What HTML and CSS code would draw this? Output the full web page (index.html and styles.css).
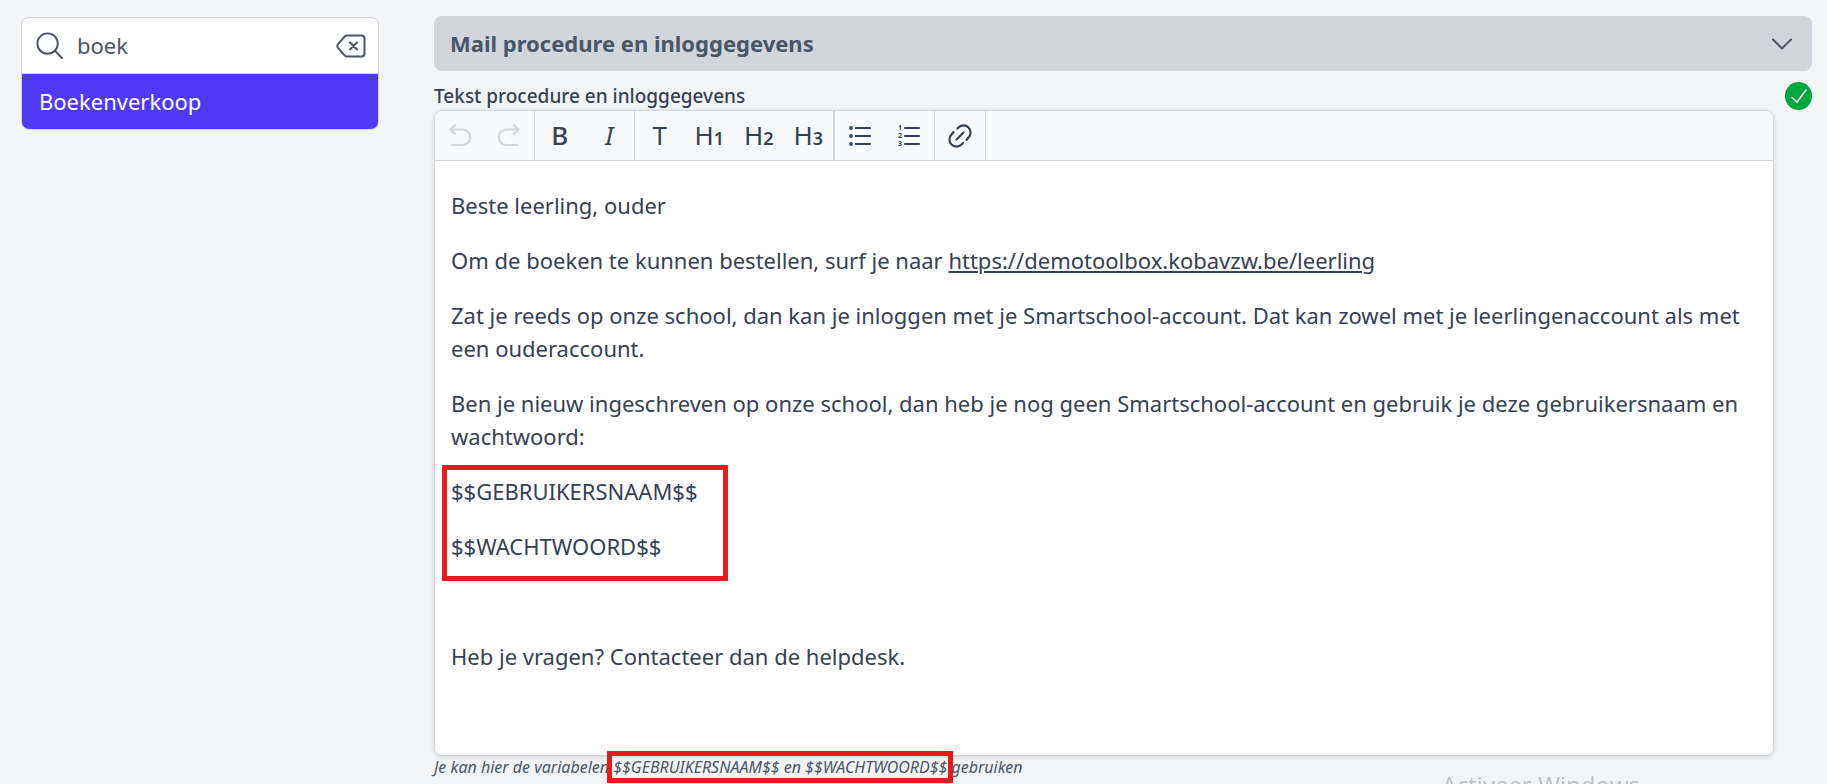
FILE: index.html
```html
<!DOCTYPE html>
<html lang="nl">
<head>
<meta charset="utf-8">
<meta name="viewport" content="width=device-width, initial-scale=1">
<title>Boekenverkoop</title>
<link rel="stylesheet" href="styles.css">
</head>
<body>
<div class="page">
  <nav class="sidebar" aria-label="Menu">
    <div class="search">
      <svg class="search-icon" viewBox="0 0 28 28" aria-hidden="true"><circle cx="12" cy="12" r="10.6"/><path d="M19.5 19.5 27 27"/></svg>
      <input class="search-input" type="text" value="boek" aria-label="Zoeken">
      <button class="search-clear" type="button" aria-label="Wissen">
        <svg viewBox="0 0 30 24" aria-hidden="true"><path d="M11 1.5h14.5a3 3 0 0 1 3 3v15a3 3 0 0 1-3 3H11a3 3 0 0 1-2.2-.9L2 13.8a2.500 2.500 0 0 1 0-3.600L8.800 2.400A3 3 0 0 1 11 1.500Z"/><path d="m14 8.500 7 7m0-7-7 7"/></svg>
      </button>
    </div>
    <a class="menu-item" href="#boekenverkoop">Boekenverkoop</a>
  </nav>

  <main class="main">
    <button class="section-header" type="button" aria-expanded="true">
      <span>Mail procedure en inloggegevens</span>
      <svg class="chevron" viewBox="0 0 20 12" aria-hidden="true"><path d="m1 1.500 9 9 9-9"/></svg>
    </button>

    <div class="label-row">
      <span class="label" id="editor-label">Tekst procedure en inloggegevens</span>
      <span class="status" role="img" aria-label="Opgeslagen">
        <svg viewBox="0 0 16 14" aria-hidden="true"><path d="M1 8.500 6 13 15 1"/></svg>
      </span>
    </div>

    <div class="editor">
      <div class="toolbar" role="toolbar" aria-label="Opmaak">
        <div class="group">
          <button class="tool" type="button" disabled aria-label="Ongedaan maken"><svg viewBox="0 0 24 24"><path d="M7 1 2.500 5.500 7 10M2.500 5.500h12a7.500 7.500 0 0 1 0 15.500H4"/></svg></button>
          <button class="tool" type="button" disabled aria-label="Opnieuw"><svg viewBox="0 0 24 24"><path d="m17 1 4.500 4.500L17 10M21.500 5.500h-12a7.500 7.500 0 0 0 0 15.500H20"/></svg></button>
        </div>
        <div class="group">
          <button class="tool letter strong" type="button" aria-label="Vet">B</button>
          <button class="tool letter slanted" type="button" aria-label="Cursief">I</button>
        </div>
        <div class="group group-wide">
          <button class="tool letter" type="button" aria-label="Tekst">T</button>
          <button class="tool letter" type="button" aria-label="Kop 1">H<span class="level">1</span></button>
          <button class="tool letter" type="button" aria-label="Kop 2">H<span class="level">2</span></button>
          <button class="tool letter" type="button" aria-label="Kop 3">H<span class="level">3</span></button>
        </div>
        <div class="group">
          <button class="tool" type="button" aria-label="Opsomming"><svg viewBox="0 0 24 24"><path d="M8 4h14M8 12h14M8 20h14"/><g class="dots"><circle cx="3" cy="4" r="1.900"/><circle cx="3" cy="12" r="1.900"/><circle cx="3" cy="20" r="1.900"/></g></svg></button>
          <button class="tool" type="button" aria-label="Genummerde lijst"><svg viewBox="0 0 24 24"><path d="M8 4h14M8 12h14M8 20h14"/><g class="numbers"><text x="1" y="6">1</text><text x="1" y="14">2</text><text x="1" y="22">3</text></g></svg></button>
        </div>
        <div class="group group-single">
          <button class="tool" type="button" aria-label="Link"><svg viewBox="0 0 24 24"><path d="m8.500 15.500 7-7M9.500 4.500l1-1a7 7 0 0 1 10 10l-2 2.500M5.500 8l-2 2.500a7 7 0 0 0 10 10l1.500-1.500"/></svg></button>
        </div>
      </div>
      <div class="content" contenteditable="true" role="textbox" aria-multiline="true" aria-labelledby="editor-label" spellcheck="false">
        <p>Beste leerling, ouder</p>
        <p>Om de boeken te kunnen bestellen, surf je naar <a href="https://demotoolbox.kobavzw.be/leerling">https://demotoolbox.kobavzw.be/leerling</a></p>
        <p>Zat je reeds op onze school, dan kan je inloggen met je Smartschool-account. Dat kan zowel met je leerlingenaccount als met een ouderaccount.</p>
        <p>Ben je nieuw ingeschreven op onze school, dan heb je nog geen Smartschool-account en gebruik je deze gebruikersnaam en wachtwoord:</p>
        <div class="marked marked-block">
          <p>$$GEBRUIKERSNAAM$$</p>
          <p>$$WACHTWOORD$$</p>
        </div>
        <p><br></p>
        <p>Heb je vragen? Contacteer dan de helpdesk.</p>
        <p><br></p>
      </div>
    </div>
    <p class="hint">Je kan hier de variabelen <span class="marked marked-inline">$$GEBRUIKERSNAAM$$ en $$WACHTWOORD$$</span> gebruiken</p>
  </main>
</div>
<div class="watermark">Activeer Windows</div>
</body>
</html>
```
FILE: styles.css
```css
* {
  box-sizing: border-box;
}

body {
  margin: 0;
  height: 100vh;
  overflow: hidden;
  background: #f3f4f6;
  color: #364153;
  font-family: "Noto Sans", sans-serif;
  font-size: 22px;
  line-height: 33px;
}

button,
input {
  font: inherit;
  color: inherit;
}

button {
  border: 0;
  padding: 0;
  background: none;
}

svg {
  display: block;
  fill: none;
  stroke: currentColor;
  stroke-width: 2;
  stroke-linecap: round;
  stroke-linejoin: round;
}

.page {
  display: flex;
  align-items: flex-start;
  gap: 55px;
  padding: 16px 15px 0 21px;
}

.sidebar {
  flex: 0 0 358px;
  margin-top: 1px;
  overflow: hidden;
  border: 1px solid #d1d5dc;
  border-radius: 8px;
  background: #fff;
}

.search {
  display: flex;
  align-items: center;
  height: 56px;
  padding: 0 12px 0 14px;
  border-bottom: 1px solid #d1d5dc;
  color: #4a5565;
}

.search-icon {
  width: 27px;
  height: 27px;
  flex: none;
}

.search-input {
  flex: 1;
  min-width: 0;
  padding: 0 14px;
  border: 0;
  outline: 0;
  background: none;
}

.search-clear svg {
  width: 30px;
  height: 24px;
}

.menu-item {
  display: block;
  padding: 11px 17px;
  background: #4f39f6;
  color: #fff;
  text-decoration: none;
}

.main {
  flex: 1;
  min-width: 0;
}

.section-header {
  display: flex;
  align-items: center;
  justify-content: space-between;
  width: 100%;
  padding: 11px 20px 11px 16px;
  border-radius: 8px;
  background: #d1d5dc;
  color: #4a5565;
  font-weight: 700;
}

.chevron {
  width: 20px;
  height: 12px;
}

.label-row {
  display: flex;
  align-items: center;
  justify-content: space-between;
  height: 28px;
  margin-top: 11px;
}

.label {
  font-size: 19px;
  font-weight: 500;
  line-height: 28px;
}

.status {
  display: grid;
  place-items: center;
  width: 27px;
  height: 28px;
  border-radius: 50%;
  background: #00a63e;
  color: #fff;
}

.status svg {
  width: 16px;
  height: 14px;
  stroke-width: 1.5;
}

.editor {
  margin-right: 38px;
  overflow: hidden;
  border: 1px solid #d1d5dc;
  border-radius: 8px;
  background: #fff;
  box-shadow: 0 1px 4px rgb(0 0 0 / 14%);
}

.toolbar {
  display: flex;
  height: 50px;
  border-bottom: 1px solid #d1d5dc;
  background: #f9fafb;
}

.group {
  display: flex;
  width: 100px;
  border-right: 1px solid #d1d5dc;
}

.group-wide {
  width: 200px;
  border-right-width: 2px;
}

.group-single {
  width: 51px;
}

.tool {
  display: flex;
  flex: 1;
  align-items: center;
  justify-content: center;
}

.tool:disabled {
  color: #d1d5dc;
}

.tool svg {
  width: 24px;
  height: 24px;
  stroke-width: 2.2;
}

.letter {
  align-items: baseline;
  padding-top: 8px;
  font-size: 26px;
}

.strong {
  font-weight: 500;
}

.slanted {
  font-style: italic;
}

.level {
  font-size: 18px;
  font-weight: 600;
}

.dots,
.numbers {
  fill: currentColor;
  stroke: none;
}

.numbers {
  font-size: 7px;
  font-weight: 700;
}

.content {
  padding: 28px 16px 27px;
  outline: 0;
}

.content p {
  margin: 0 0 22px;
}

.content p:last-child {
  margin-bottom: 0;
}

.content a {
  color: inherit;
  text-decoration: underline;
}

.marked {
  position: relative;
}

.marked::after {
  content: "";
  position: absolute;
  border: 5px solid #e71b1b;
  pointer-events: none;
}

.marked-block {
  width: fit-content;
  margin-bottom: 22px;
}

.marked-block::after {
  inset: -10px -30px -18px -9px;
}

.marked-inline::after {
  inset: -5px -6px;
}

.hint {
  margin: 0;
  color: #4a5565;
  font-size: 16px;
  font-style: italic;
  line-height: 22px;
}

.watermark {
  position: fixed;
  right: 187px;
  bottom: -17px;
  color: #bdbec0;
  font-family: "Open Sans", sans-serif;
  font-size: 24px;
  pointer-events: none;
}
```
